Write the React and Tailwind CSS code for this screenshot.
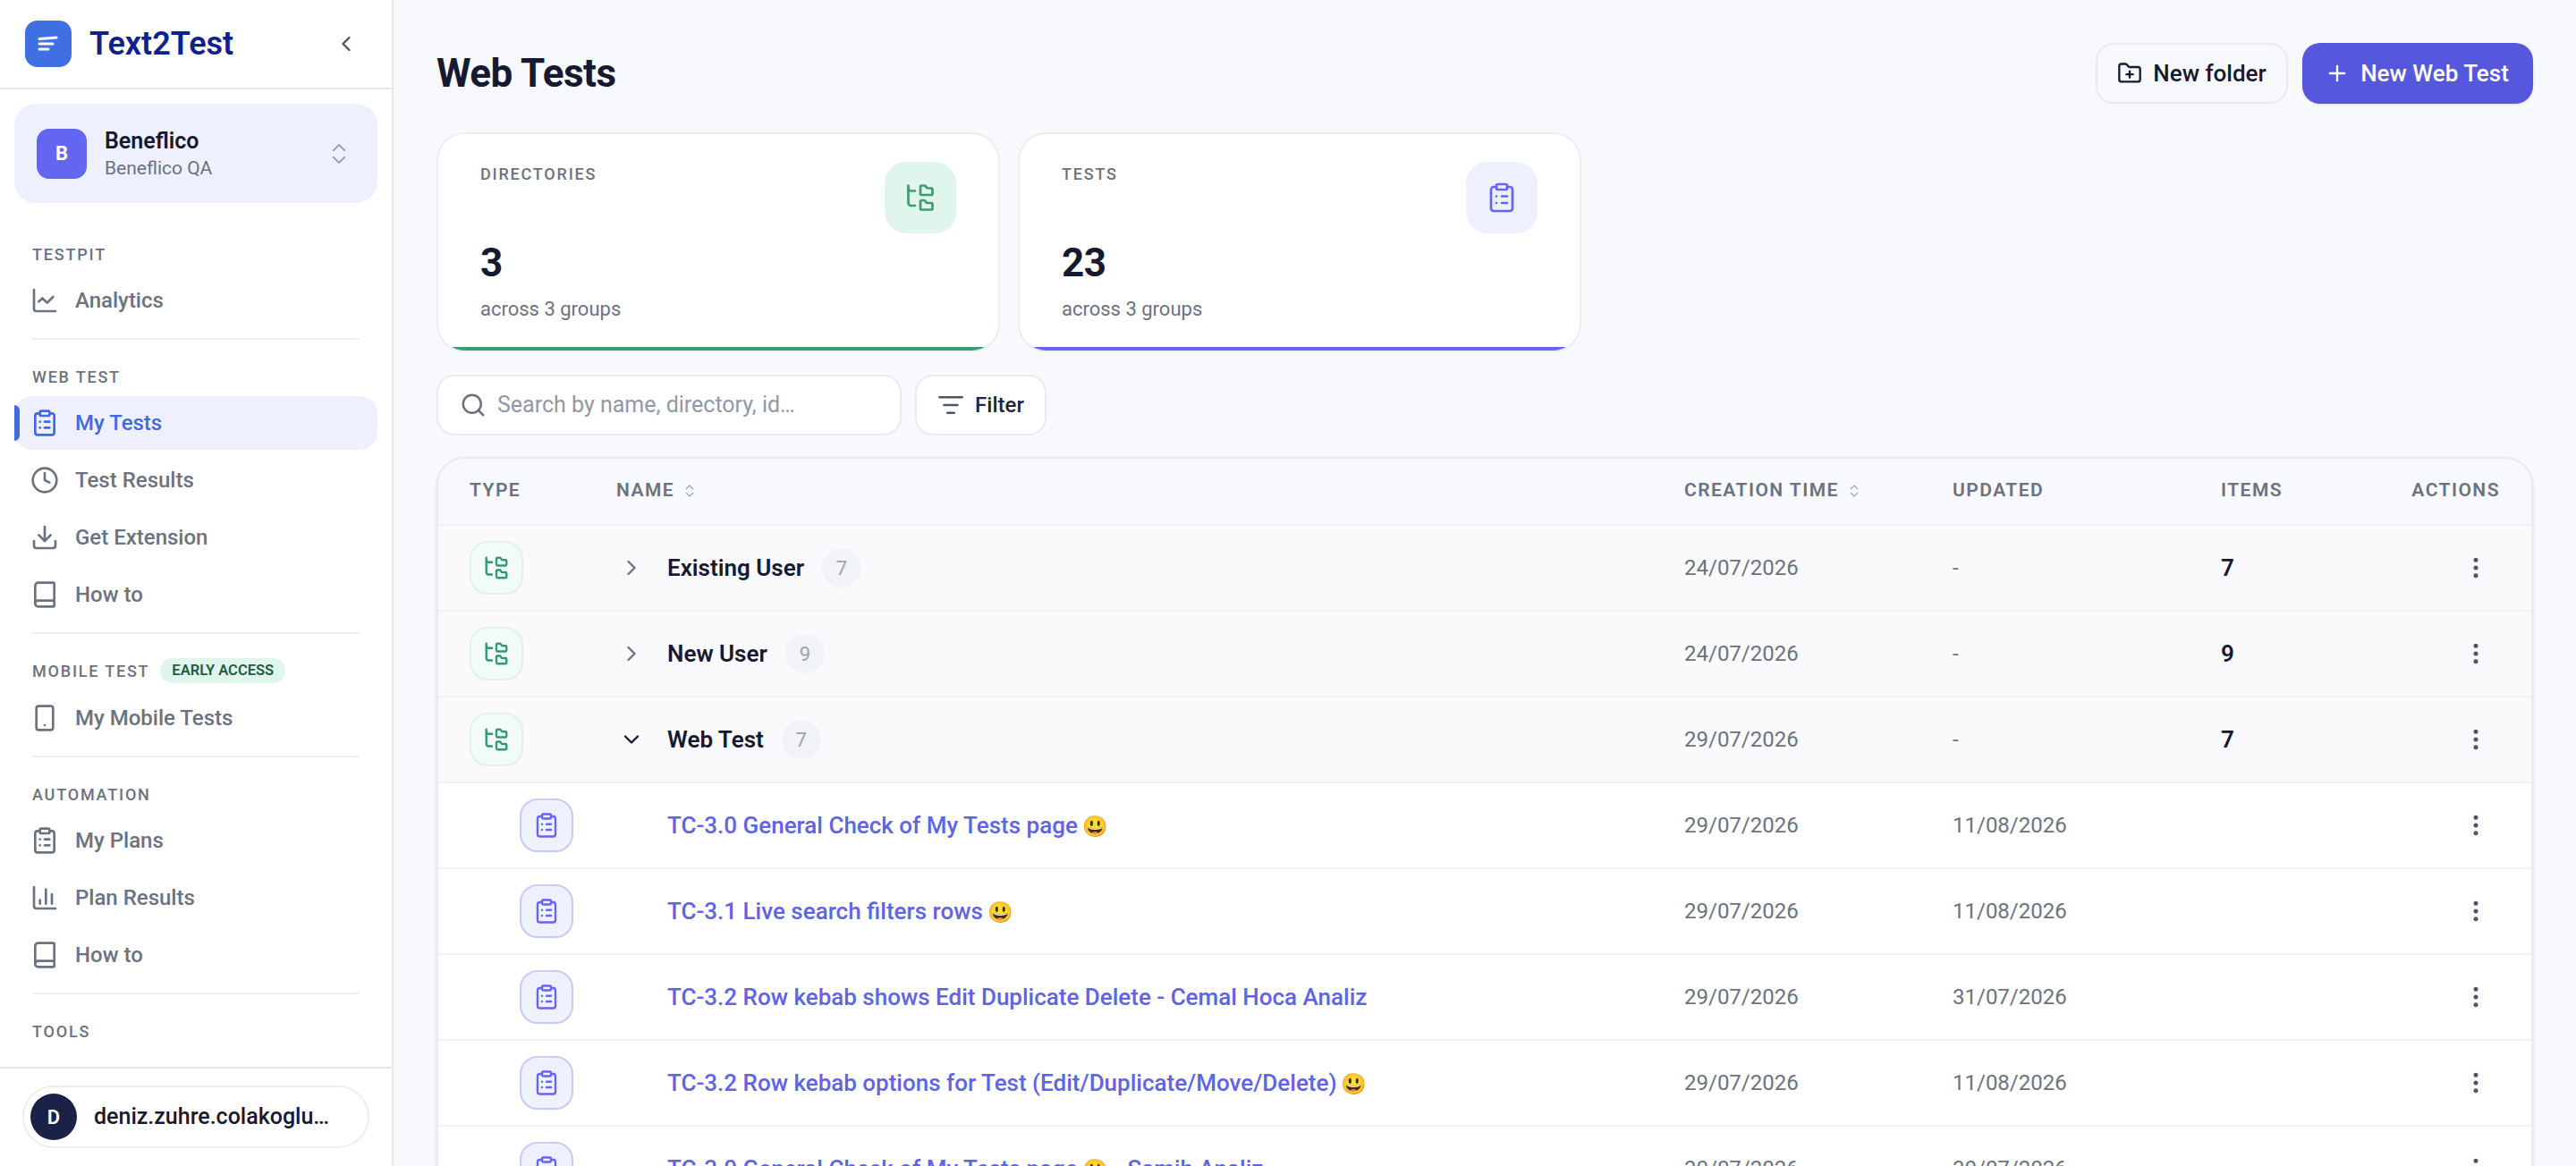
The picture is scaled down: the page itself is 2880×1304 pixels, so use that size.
import React from 'react';
import {
  Book,
  ChartColumn,
  ChartLine,
  ChevronDown,
  ChevronLeft,
  ChevronRight,
  ChevronsUpDown,
  ClipboardList,
  Clock,
  Download,
  EllipsisVertical,
  FolderPlus,
  FolderTree,
  ListFilter,
  Plus,
  Search,
  Smartphone,
} from 'lucide-react';

const groups = [
  { name: 'Existing User', count: 7, created: '24/07/2026' },
  { name: 'New User', count: 9, created: '24/07/2026' },
  { name: 'Web Test', count: 7, created: '29/07/2026', open: true },
];

const tests = [
  { name: 'TC-3.0 General Check of My Tests page', emoji: true, created: '29/07/2026', updated: '11/08/2026' },
  { name: 'TC-3.1 Live search filters rows', emoji: true, created: '29/07/2026', updated: '11/08/2026' },
  { name: 'TC-3.2 Row kebab shows Edit Duplicate Delete - Cemal Hoca Analiz', created: '29/07/2026', updated: '31/07/2026' },
  { name: 'TC-3.2 Row kebab options for Test (Edit/Duplicate/Move/Delete)', emoji: true, created: '29/07/2026', updated: '11/08/2026' },
  { name: 'TC-3.0 General Check of My Tests page', emoji: true, suffix: ' - Samih Analiz', created: '30/07/2026', updated: '30/07/2026' },
];

const rowGrid = 'grid grid-cols-[164px_1194px_300px_300px_1fr_150px] items-center pl-[35px] pr-[35px]';

const SectionLabel = ({ children, badge }) => (
  <div className="flex h-[28px] items-center gap-[12px] pl-[36px]">
    <span className="text-[18px] font-medium tracking-[0.1em] text-[#6b7280]">{children}</span>
    {badge && (
      <span className="rounded-full bg-[#e0f5ec] px-[13px] py-[3px] text-[16.5px] leading-[22px] font-semibold text-[#1d5c42]">
        {badge}
      </span>
    )}
  </div>
);

const NavItem = ({ icon: Icon, label, active }) => (
  <div
    className={`relative mx-[16px] flex h-[60px] items-center gap-[18px] rounded-[20px] pl-[18px] text-[24px] font-medium ${
      active ? 'bg-[#eef1fd] text-[#4169e1]' : 'text-[#6b7280]'
    }`}
  >
    {active && <span className="absolute top-[10px] left-0 h-[40px] w-[6px] rounded-r-[6px] bg-[#4169e1]" />}
    <Icon size={32} />
    <span>{label}</span>
  </div>
);

const Divider = () => <div className="mx-[36px] mt-[12px] mb-[27px] h-[2px] bg-[#eff0f3]" />;

const Sidebar = () => (
  <aside className="flex h-full w-[440px] shrink-0 flex-col border-r-2 border-[#e5e7eb] bg-white">
    <div className="flex h-[100px] shrink-0 items-center border-b-2 border-[#e5e7eb] pr-[37px] pl-[28px]">
      <div className="flex h-[52px] w-[52px] items-center justify-center rounded-[14px] bg-[#3f6fe0]">
        <svg width="28" height="28" viewBox="0 0 28 28" fill="none" stroke="white" strokeWidth="3" strokeLinecap="round">
          <path d="M4 8.5 L23 7" />
          <path d="M4 14 L19 14" />
          <path d="M4 20 L14 20" />
        </svg>
      </div>
      <span className="ml-[20px] text-[36px] font-semibold text-[#11208f]">Text2Test</span>
      <ChevronLeft size={28} className="ml-auto text-[#4b5563]" />
    </div>

    <div className="mx-[16px] mt-[16px] flex h-[111px] shrink-0 items-center rounded-[24px] bg-[#eef1fd] pr-[28px] pl-[25px]">
      <div className="flex h-[56px] w-[56px] items-center justify-center rounded-[14px] bg-[#6366f1] text-[22px] font-bold text-white">
        B
      </div>
      <div className="ml-[20px]">
        <div className="text-[25px] leading-[33px] font-semibold text-[#151a30]">Beneflico</div>
        <div className="text-[21px] leading-[29px] text-[#6b7280]">Beneflico QA</div>
      </div>
      <ChevronsUpDown size={30} strokeWidth={1.5} className="ml-auto text-[#9ca3af]" />
    </div>

    <nav className="min-h-0 flex-1 overflow-hidden pt-[43px]">
      <SectionLabel>TESTPIT</SectionLabel>
      <div className="mt-[8px]">
        <NavItem icon={ChartLine} label="Analytics" />
      </div>
      <Divider />
      <SectionLabel>WEB TEST</SectionLabel>
      <div className="mt-[8px] flex flex-col gap-[4px]">
        <NavItem icon={ClipboardList} label="My Tests" active />
        <NavItem icon={Clock} label="Test Results" />
        <NavItem icon={Download} label="Get Extension" />
        <NavItem icon={Book} label="How to" />
      </div>
      <Divider />
      <SectionLabel badge="EARLY ACCESS">MOBILE TEST</SectionLabel>
      <div className="mt-[9px]">
        <NavItem icon={Smartphone} label="My Mobile Tests" />
      </div>
      <Divider />
      <SectionLabel>AUTOMATION</SectionLabel>
      <div className="mt-[8px] flex flex-col gap-[4px]">
        <NavItem icon={ClipboardList} label="My Plans" />
        <NavItem icon={ChartColumn} label="Plan Results" />
        <NavItem icon={Book} label="How to" />
      </div>
      <Divider />
      <SectionLabel>TOOLS</SectionLabel>
    </nav>

    <div className="h-[111px] shrink-0 border-t-2 border-[#e5e7eb] px-[25px] pt-[19px]">
      <div className="flex h-[70px] items-center rounded-full border-2 border-[#eceef2] pl-[7px]">
        <div className="flex h-[52px] w-[52px] shrink-0 items-center justify-center rounded-full bg-[#1a2247] text-[22px] font-semibold text-white">
          D
        </div>
        <span className="ml-[19px] w-[268px] truncate text-[25px] font-medium text-[#151a30]">
          deniz.zuhre.colakoglu@beneflico.com
        </span>
      </div>
    </div>
  </aside>
);

const StatCard = ({ label, value, icon: Icon, iconBox, bar }) => (
  <div className="flex h-[246px] w-[630px] flex-col overflow-hidden rounded-[32px] border-2 border-[#eceef3] bg-white">
    <div className="flex flex-1 justify-between pt-[31px] pr-[47px] pl-[47px]">
      <div>
        <div className="mt-[2px] text-[18px] leading-[24px] font-medium tracking-[0.1em] text-[#6b7280]">{label}</div>
        <div className="mt-[61px] text-[44px] leading-[52px] font-bold tracking-[-0.012em] text-[#151a30]">{value}</div>
        <div className="mt-[12px] text-[22px] leading-[28px] text-[#6b7280]">across 3 groups</div>
      </div>
      <div className={`flex h-[80px] w-[80px] items-center justify-center rounded-[24px] ${iconBox}`}>
        <Icon size={36} strokeWidth={1.8} />
      </div>
    </div>
    <div className={`h-[4px] shrink-0 ${bar}`} />
  </div>
);

const Kebab = () => (
  <div className="flex justify-end pr-[3px]">
    <span className="flex h-[48px] w-[48px] items-center justify-center text-[#4b5563]">
      <EllipsisVertical size={30} />
    </span>
  </div>
);

const SortIcon = () => <ChevronsUpDown size={18} strokeWidth={1.5} className="text-[#9ca3af]" />;

const GroupRow = ({ name, count, created, open }) => (
  <div className={`${rowGrid} h-[96px] border-b-2 border-[#f0f1f4] bg-[#fafafd]`}>
    <div className="flex h-[60px] w-[60px] items-center justify-center rounded-[20px] border-2 border-[#e2f1eb] bg-[#f3fbf8] text-[#2f9a74]">
      <FolderTree size={30} strokeWidth={1.9} />
    </div>
    <div className="flex items-center">
      <span className="flex w-[57px] pl-[3px]">
        {open ? (
          <ChevronDown size={28} className="text-[#151a30]" />
        ) : (
          <ChevronRight size={28} className="text-[#6b7280]" />
        )}
      </span>
      <span className="text-[26px] font-semibold text-[#151a30]">{name}</span>
      <span className="ml-[20px] flex h-[44px] w-[44px] items-center justify-center rounded-full bg-[#f2f3f7] text-[22px] text-[#9ca3af]">
        {count}
      </span>
    </div>
    <span className="text-[24px] text-[#6b7280]">{created}</span>
    <span className="text-[24px] text-[#6b7280]">-</span>
    <span className="text-[26px] font-semibold text-[#151a30]">{count}</span>
    <Kebab />
  </div>
);

const TestRow = ({ name, emoji, suffix, created, updated }) => (
  <div className={`${rowGrid} h-[96px] shrink-0 border-b-2 border-[#f0f1f4] bg-white`}>
    <div className="ml-[56px] flex h-[60px] w-[60px] items-center justify-center rounded-[20px] border-2 border-[#c9cbf4] bg-[#eff1fe] text-[#6366f1]">
      <ClipboardList size={30} strokeWidth={1.9} />
    </div>
    <span className="pl-[57px] text-[26px] font-medium text-[#6063e4]">
      {name}
      {emoji && <span className="ml-[5px] text-[23px]">😃</span>}
      {suffix}
    </span>
    <span className="text-[24px] text-[#6b7280]">{created}</span>
    <span className="text-[24px] text-[#6b7280]">{updated}</span>
    <span />
    <Kebab />
  </div>
);

const HeaderCell = ({ children, sort }) => (
  <div className="flex items-center gap-[8px] pb-[2px] text-[21px] font-semibold tracking-[0.07em] text-[#6b7280]">
    {children}
    {sort && <SortIcon />}
  </div>
);

export default function App() {
  return (
    <div
      className="flex h-screen overflow-hidden bg-[#f8f9fc]"
      style={{ fontFamily: 'Roboto, "Noto Sans", sans-serif' }}
    >
      <Sidebar />

      <main className="min-w-0 flex-1 overflow-hidden px-[48px] pt-[48px]">
        <div className="flex items-center justify-between">
          <h1 className="text-[44px] font-bold tracking-[-0.012em] text-[#151a30]">Web Tests</h1>
          <div className="flex gap-[16px]">
            <button className="flex h-[68px] w-[215px] items-center justify-center gap-[12px] rounded-[20px] border-2 border-[#e9ebf0] text-[26px] font-medium text-[#151a30]">
              <FolderPlus size={28} />
              New folder
            </button>
            <button className="flex h-[68px] w-[258px] items-center justify-center gap-[12px] rounded-[20px] bg-[#5558dd] pr-[2px] text-[26px] font-medium text-white shadow-sm">
              <Plus size={28} />
              New Web Test
            </button>
          </div>
        </div>

        <div className="mt-[32px] flex gap-[20px]">
          <StatCard label="DIRECTORIES" value="3" icon={FolderTree} iconBox="bg-[#e0f5ec] text-[#3d9b76]" bar="bg-[#3d9b76]" />
          <StatCard label="TESTS" value="23" icon={ClipboardList} iconBox="bg-[#eef0fd] text-[#6366f1]" bar="bg-[#6366f1]" />
        </div>

        <div className="mt-[25px] flex gap-[15px]">
          <div className="flex h-[68px] w-[520px] items-center gap-[12px] rounded-[20px] border-2 border-[#e9ebf0] bg-white pl-[24px]">
            <Search size={30} className="shrink-0 text-[#6b7280]" />
            <input
              className="w-full bg-transparent text-[25px] outline-none placeholder:text-[#9298a3]"
              placeholder="Search by name, directory, id…"
            />
          </div>
          <button className="flex h-[68px] w-[147px] items-center justify-center gap-[12px] rounded-[20px] border-2 border-[#e9ebf0] bg-white text-[24px] font-medium text-[#1f2437]">
            <ListFilter size={30} className="text-[#4b5563]" />
            Filter
          </button>
        </div>

        <div className="mt-[24px] overflow-hidden rounded-[32px] border-2 border-[#e9ebf0] bg-white shadow-sm">
          <div className={`${rowGrid} h-[75px] border-b-2 border-[#f0f1f4] bg-[#f8f9fc]`}>
            <HeaderCell>TYPE</HeaderCell>
            <HeaderCell sort>NAME</HeaderCell>
            <HeaderCell sort>CREATION TIME</HeaderCell>
            <HeaderCell>UPDATED</HeaderCell>
            <HeaderCell>ITEMS</HeaderCell>
            <div className="flex justify-end">
              <HeaderCell>ACTIONS</HeaderCell>
            </div>
          </div>
          {groups.map((g) => (
            <GroupRow key={g.name} {...g} />
          ))}
          {tests.map((t, i) => (
            <TestRow key={i} {...t} />
          ))}
        </div>
      </main>
    </div>
  );
}
